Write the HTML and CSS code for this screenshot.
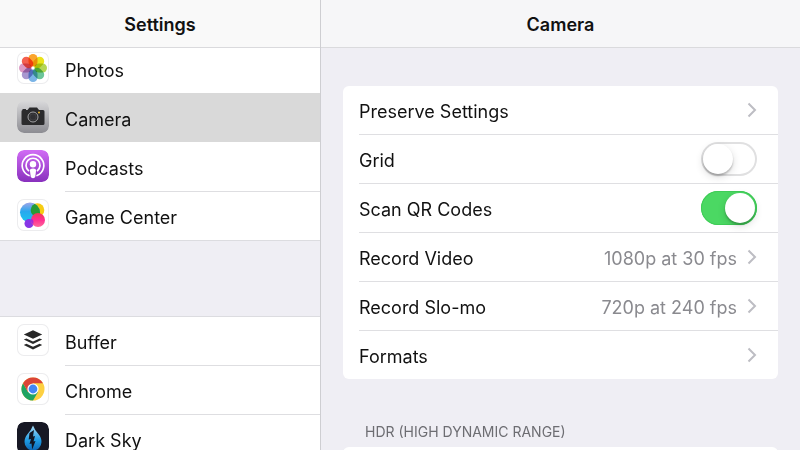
FILE: index.html
```html
<!DOCTYPE html>
<html lang="en">
<head>
<meta charset="utf-8">
<meta name="viewport" content="width=device-width, initial-scale=1">
<title>Settings</title>
<link rel="stylesheet" href="styles.css">
</head>
<body>
<div class="app">
  <nav class="sidebar">
    <header class="bar"><h1>Settings</h1></header>
    <div class="apps">
      <a class="app-row first" href="#photos">
        <svg class="icon framed" viewBox="0 0 32 32" aria-hidden="true">
          <g class="petals">
            <rect x="11.500" y="2" width="9" height="12.500" rx="4.500" fill="#fba42c"/>
            <rect x="11.500" y="2" width="9" height="12.500" rx="4.500" fill="#eae31c" transform="rotate(45 16 16)"/>
            <rect x="11.500" y="2" width="9" height="12.500" rx="4.500" fill="#b5d655" transform="rotate(90 16 16)"/>
            <rect x="11.500" y="2" width="9" height="12.500" rx="4.500" fill="#6cc59a" transform="rotate(135 16 16)"/>
            <rect x="11.500" y="2" width="9" height="12.500" rx="4.500" fill="#7ab4e6" transform="rotate(180 16 16)"/>
            <rect x="11.500" y="2" width="9" height="12.500" rx="4.500" fill="#a898d0" transform="rotate(225 16 16)"/>
            <rect x="11.500" y="2" width="9" height="12.500" rx="4.500" fill="#dc9ac4" transform="rotate(270 16 16)"/>
            <rect x="11.500" y="2" width="9" height="12.500" rx="4.500" fill="#f4604f" transform="rotate(315 16 16)"/>
          </g>
        </svg>
        <span class="app-name">Photos</span>
      </a>
      <a class="app-row selected" href="#camera" aria-current="page">
        <svg class="icon" viewBox="0 0 32 32" aria-hidden="true">
          <defs><linearGradient id="steel" x2="0" y2="1"><stop stop-color="#d8d8da"/><stop offset="1" stop-color="#8c8c92"/></linearGradient></defs>
          <rect width="32" height="32" rx="7" fill="url(#steel)"/>
          <path d="M5.500 9V8h3.500v1h1.500l2-2.500h7.500L22 9h4q1.500 0 1.500 1.500v12q0 1.500-1.500 1.500H6q-1.500 0-1.500-1.500v-12Q4.500 9 5.500 9z" fill="#2b2b2d"/>
          <circle cx="16" cy="16" r="5" fill="#242426" stroke="#a5a5a8"/>
          <circle cx="16" cy="16" r="3.300" fill="#303033" stroke="#505054" stroke-width=".6"/>
          <circle cx="22" cy="11.500" r="1" fill="#e7b22a"/>
        </svg>
        <span class="app-name">Camera</span>
      </a>
      <a class="app-row" href="#podcasts">
        <svg class="icon" viewBox="0 0 32 32" aria-hidden="true">
          <defs><linearGradient id="violet" x2="0" y2="1"><stop stop-color="#d16cf5"/><stop offset="1" stop-color="#8830bd"/></linearGradient></defs>
          <rect width="32" height="32" rx="7" fill="url(#violet)"/>
          <g fill="none" stroke="#fff" stroke-width="1.700" stroke-linecap="round">
            <path d="M12 25.500a10.800 10.800 0 1 1 8 0"/>
            <path d="M11.500 20.600a7 7 0 1 1 9 0"/>
          </g>
          <circle cx="16" cy="14.200" r="3.200" fill="#fff"/>
          <path d="M12.900 20.500q0-2 3.100-2t3.100 2l-.8 6q-.3 1.700-2.300 1.700t-2.300-1.700z" fill="#fff"/>
        </svg>
        <span class="app-name">Podcasts</span>
      </a>
      <a class="app-row" href="#game-center">
        <svg class="icon framed" viewBox="0 0 32 32" aria-hidden="true">
          <defs>
            <linearGradient id="aqua" x2="0" y2="1"><stop stop-color="#a0a5e8"/><stop offset=".45" stop-color="#28a8ee"/><stop offset="1" stop-color="#1bc6ee"/></linearGradient>
            <linearGradient id="rose" x2="0" y2="1"><stop stop-color="#ef3a55"/><stop offset=".5" stop-color="#ff2f92"/><stop offset="1" stop-color="#ff6a9a"/></linearGradient>
            <clipPath id="blue-disc"><circle cx="13" cy="13.500" r="10"/></clipPath>
          </defs>
          <circle cx="20.500" cy="11" r="6.800" fill="#f6cc12"/>
          <circle cx="13" cy="13.500" r="10" fill="url(#aqua)"/>
          <circle cx="20.500" cy="11" r="6.800" fill="#269b35" clip-path="url(#blue-disc)"/>
          <circle cx="12" cy="24.500" r="4.500" fill="#8736e6"/>
          <circle cx="21" cy="21" r="7" fill="url(#rose)"/>
          <path d="M14.200 19.500a7 7 0 0 0 .5 4.700l1.700.8v-2.500q0-2-2.200-3z" fill="#a12bd8"/>
        </svg>
        <span class="app-name">Game Center</span>
      </a>
    </div>
    <div class="apps">
      <a class="app-row first" href="#buffer">
        <svg class="icon framed" viewBox="0 0 32 32" aria-hidden="true">
          <g fill="#282828">
            <path d="M16 6.300l9.200 4.200-9.200 4.300-9.200-4.300z"/>
            <path d="M6.800 15.600l2.600-1.200 6.600 3 6.600-3 2.600 1.200-9.200 4.400z"/>
            <path d="M6.800 21l2.600-1.200 6.600 3 6.600-3 2.600 1.200-9.200 4.400z"/>
          </g>
        </svg>
        <span class="app-name">Buffer</span>
      </a>
      <a class="app-row" href="#chrome">
        <svg class="icon framed" viewBox="0 0 32 32" aria-hidden="true">
          <circle cx="16" cy="16" r="11.500" fill="#fdd041"/>
          <path d="M6.040 10.250A11.500 11.500 0 0 0 16 27.500l5-8.600-5-2.900-5 2.900z" fill="#1ea362"/>
          <path d="M6.040 10.250A11.500 11.500 0 0 1 25.960 10.250H16L11 18.900z" fill="#db4437"/>
          <circle cx="16" cy="16" r="5.600" fill="#fff"/>
          <circle cx="16" cy="16" r="4.400" fill="#4285f4"/>
        </svg>
        <span class="app-name">Chrome</span>
      </a>
      <a class="app-row" href="#dark-sky">
        <svg class="icon" viewBox="0 0 32 32" aria-hidden="true">
          <defs><linearGradient id="drop" x2="0" y2="1"><stop stop-color="#a9dcf6"/><stop offset=".6" stop-color="#1e9be4"/><stop offset="1" stop-color="#0d65b2"/></linearGradient></defs>
          <rect width="32" height="32" rx="7" fill="#171824"/>
          <path d="M16 3.500q1.500 4 5 8t3.500 8.500a8.500 8.500 0 0 1-17 0q0-4.500 3.500-8.500t5-8z" fill="url(#drop)"/>
          <path d="M17 8l-4.500 3-.8 6.500 2.300-.5-1.500 5 2-.5.700 6 3.300-8.500-2 .5 1.500-5.500-2 .5z" fill="#111522"/>
        </svg>
        <span class="app-name">Dark Sky</span>
      </a>
    </div>
  </nav>

  <main class="detail">
    <header class="bar"><h2>Camera</h2></header>
    <div class="content">
      <section class="card">
        <a class="row" href="#preserve"><span class="label">Preserve Settings</span>
          <svg class="chevron" viewBox="0 0 10 16" aria-hidden="true"><path d="M1.500 1.500L8 8l-6.500 6.500"/></svg></a>
        <label class="row" for="grid"><span class="label">Grid</span><input class="switch" id="grid" type="checkbox"></label>
        <label class="row" for="qr"><span class="label">Scan QR Codes</span><input class="switch" id="qr" type="checkbox" checked></label>
        <a class="row" href="#video"><span class="label">Record Video</span><span class="value">1080p at 30 fps</span>
          <svg class="chevron" viewBox="0 0 10 16" aria-hidden="true"><path d="M1.500 1.500L8 8l-6.500 6.500"/></svg></a>
        <a class="row" href="#slo-mo"><span class="label">Record Slo-mo</span><span class="value">720p at 240 fps</span>
          <svg class="chevron" viewBox="0 0 10 16" aria-hidden="true"><path d="M1.500 1.500L8 8l-6.500 6.500"/></svg></a>
        <a class="row" href="#formats"><span class="label">Formats</span>
          <svg class="chevron" viewBox="0 0 10 16" aria-hidden="true"><path d="M1.500 1.500L8 8l-6.500 6.500"/></svg></a>
      </section>
      <h3 class="section-title">HDR (HIGH DYNAMIC RANGE)</h3>
      <section class="card next"></section>
    </div>
  </main>
</div>
</body>
</html>
```
FILE: styles.css
```css
* {
  box-sizing: border-box;
}

body {
  margin: 0;
  background: #efeef4;
  color: #111;
  font-family: Inter, "Liberation Sans", sans-serif;
  font-size: 18px;
  line-height: 24px;
}

a {
  color: inherit;
  text-decoration: none;
}

.app {
  display: grid;
  grid-template-columns: 2fr 3fr;
  height: 100vh;
  overflow: hidden;
}

.sidebar,
.detail {
  min-width: 0;
  overflow: hidden;
}

.detail {
  border-left: 1px solid #ceced2;
}

.bar {
  position: relative;
  z-index: 1;
  display: flex;
  align-items: center;
  justify-content: center;
  height: 48px;
  padding-top: 2px;
  border-bottom: 1px solid #dadadd;
  background: #f6f6f8;
}

.sidebar .bar {
  background: #f9f9f9;
}

.bar h1,
.bar h2 {
  margin: 0;
  font-size: 18px;
  font-weight: 600;
}

.apps {
  margin-top: -4px;
  border-bottom: 1px solid #dcdce0;
  background: #fff;
}

.apps + .apps {
  margin-top: 75px;
  border-top: 1px solid #dcdce0;
}

.app-row {
  display: flex;
  gap: 16px;
  height: 49px;
  padding-left: 17px;
}

.apps + .apps .first {
  height: 48px;
}

.icon {
  flex: none;
  width: 32px;
  height: 32px;
  margin-top: 8px;
  border-radius: 7px;
}

.apps + .apps .first .icon {
  margin-top: 7px;
}

.framed {
  box-shadow: inset 0 0 0 1px #ececee;
}

.petals {
  isolation: isolate;
}

.petals rect {
  mix-blend-mode: multiply;
}

.app-name {
  flex: 1;
  padding-top: 14px;
  border-top: 1px solid #dedee1;
}

.first .app-name,
.selected .app-name,
.selected + .app-row .app-name {
  border-top-color: transparent;
}

.apps + .apps .first .app-name {
  border-top: 0;
}

.selected {
  background: #d9d9d9;
}

.content {
  padding: 38px 22px 0;
}

.card {
  border-radius: 6px;
  background: #fff;
  overflow: hidden;
}

.row {
  display: flex;
  align-items: center;
  height: 49px;
  padding-right: 21px;
}

.row:first-child {
  height: 48px;
}

.row + .row {
  background: linear-gradient(#dfdfe2, #dfdfe2) 16px 0 / 100% 1px no-repeat;
}

.label {
  flex: 1;
  padding: 4px 0 0 16px;
}

.value {
  padding-top: 4px;
  color: #8a8a8f;
}

.chevron {
  width: 10px;
  height: 16px;
  margin-left: 10px;
  fill: none;
  stroke: #bdbdc3;
  stroke-width: 2;
}

.switch {
  appearance: none;
  width: 56px;
  height: 34px;
  margin: 0;
  padding: 2px;
  border-radius: 17px;
  background: #fff;
  box-shadow: inset 0 0 0 2px #e0e0e1;
}

.switch::before {
  content: "";
  display: block;
  width: 30px;
  height: 30px;
  border-radius: 50%;
  background: #fff;
  box-shadow: 0 2px 2px rgba(0, 0, 0, 0.22), 0 3px 8px rgba(0, 0, 0, 0.14);
}

.switch:checked {
  background: #4bd863;
  box-shadow: inset 0 0 0 1px #3fcc57;
}

.switch:checked::before {
  margin-left: auto;
}

.section-title {
  margin: 43px 22px 5px;
  color: #6d6d72;
  font-size: 14px;
  font-weight: 400;
  line-height: 20px;
}

.next {
  height: 49px;
}
```
